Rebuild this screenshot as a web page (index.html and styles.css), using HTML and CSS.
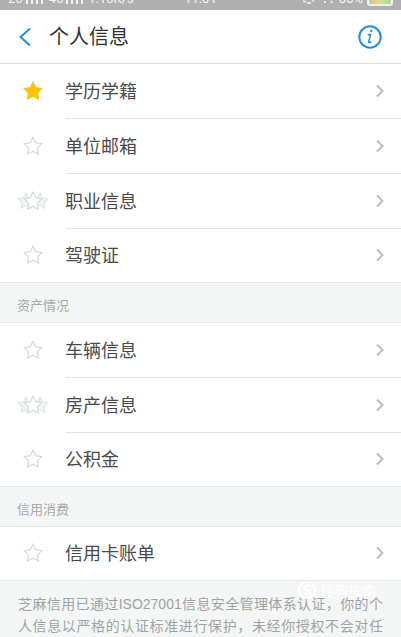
FILE: index.html
```html
<!DOCTYPE html>
<html lang="zh-CN">
<head>
<meta charset="utf-8">
<meta name="viewport" content="width=device-width, initial-scale=1">
<title>个人信息</title>
<link rel="stylesheet" href="styles.css">
</head>
<body>
<svg class="defs" aria-hidden="true">
  <symbol id="star" viewBox="0 0 20 20"><path d="M10 1.200l2.700 5.500 6.100.9-4.400 4.300 1 6.100-5.400-2.900L4.600 18l1-6.100L1.200 7.600l6.100-.9z"/></symbol>
  <symbol id="chevron" viewBox="0 0 10 14"><path d="M2 1.500L7.500 7 2 12.500"/></symbol>
</svg>
<div class="status">
  <div class="status-side">
    <span>26</span><svg class="signal" viewBox="0 0 18 8"><path d="M2 0v6M7 0v6M12 0v6M17 0v6"/></svg>
    <span class="network">46</span><svg class="signal" viewBox="0 0 18 8"><path d="M2 0v6M7 0v6M12 0v6M17 0v6"/></svg>
    <span class="speed">1.10K/s</span>
  </div>
  <span class="clock">11:01</span>
  <div class="status-side status-end">
    <svg class="wifi" viewBox="0 0 34 8"><path d="M2 3l3 1M6 5h4M11 2l2 1M24 3v2M30 3l1 2"/></svg>
    <span class="percent">88%</span><i class="battery"></i>
  </div>
</div>
<header class="header">
  <button class="icon-button" aria-label="返回"><svg class="back" viewBox="0 0 14 20"><path d="M12 1.500L2.500 10l9.500 8.500"/></svg></button>
  <h1>个人信息</h1>
  <button class="icon-button" aria-label="说明"><svg class="info" viewBox="0 0 24 24"><circle class="ring" cx="12" cy="12" r="10.700"/><path d="M9.800 10.300c1-.8 2-1.100 2.800-.9l-1.900 7.300c-.3 1.400 1 1.200 2.600-.2"/><circle class="dot" cx="13.200" cy="6" r="1.200"/></svg></button>
</header>
<main>
  <ul class="group">
    <li><a class="row" href="#"><span class="stars"><svg class="star gold"><use href="#star"/></svg></span><span class="label">学历学籍</span><svg class="chevron"><use href="#chevron"/></svg></a></li>
    <li><a class="row" href="#"><span class="stars"><svg class="star"><use href="#star"/></svg></span><span class="label">单位邮箱</span><svg class="chevron"><use href="#chevron"/></svg></a></li>
    <li><a class="row" href="#"><span class="stars"><svg class="star side"><use href="#star"/></svg><svg class="star front"><use href="#star"/></svg><svg class="star side"><use href="#star"/></svg></span><span class="label">职业信息</span><svg class="chevron"><use href="#chevron"/></svg></a></li>
    <li><a class="row" href="#"><span class="stars"><svg class="star"><use href="#star"/></svg></span><span class="label">驾驶证</span><svg class="chevron"><use href="#chevron"/></svg></a></li>
  </ul>
  <h2>资产情况</h2>
  <ul class="group">
    <li><a class="row" href="#"><span class="stars"><svg class="star"><use href="#star"/></svg></span><span class="label">车辆信息</span><svg class="chevron"><use href="#chevron"/></svg></a></li>
    <li><a class="row" href="#"><span class="stars"><svg class="star side"><use href="#star"/></svg><svg class="star front"><use href="#star"/></svg><svg class="star side"><use href="#star"/></svg></span><span class="label">房产信息</span><svg class="chevron"><use href="#chevron"/></svg></a></li>
    <li><a class="row" href="#"><span class="stars"><svg class="star"><use href="#star"/></svg></span><span class="label">公积金</span><svg class="chevron"><use href="#chevron"/></svg></a></li>
  </ul>
  <h2>信用消费</h2>
  <ul class="group">
    <li><a class="row" href="#"><span class="stars"><svg class="star"><use href="#star"/></svg></span><span class="label">信用卡账单</span><svg class="chevron"><use href="#chevron"/></svg></a></li>
  </ul>
</main>
<footer class="note">
  <div class="watermark"><svg viewBox="0 0 18 18"><circle cx="9" cy="9" r="8"/><path d="M12.500 5.500c-2-1.500-6.500-1.200-6.500 1.200 0 2.500 6.500 1.800 6.500 4.500 0 2.200-4.500 2.600-7 1"/></svg><span>搜狗指南</span></div>
  <p>芝麻信用已通过ISO27001信息安全管理体系认证，你的个人信息以严格的认证标准进行保护，未经你授权不会对任</p>
</footer>
</body>
</html>
```
FILE: styles.css
```css
* { box-sizing: border-box; }
body {
  margin: 0;
  background: #f4f6f6;
  color: #4a4a4a;
  font-family: "Noto Sans CJK SC", sans-serif;
}
svg { display: block; fill: none; flex: none; }
.defs { position: absolute; width: 0; height: 0; }
h1, h2, p, ul { margin: 0; padding: 0; font-weight: 400; }
ul { list-style: none; }

.status {
  display: flex;
  align-items: flex-end;
  justify-content: space-between;
  height: 10px;
  padding: 0 8px 4px;
  overflow: hidden;
  background: #b0b0b0;
  color: #f4f4f4;
  font: 13px/14px Roboto, sans-serif;
}
.status-side { display: flex; flex: 1; align-items: flex-end; gap: 2px; }
.status-end { justify-content: flex-end; gap: 4px; }
.signal { width: 18px; height: 8px; stroke: #f4f4f4; stroke-width: 2; }
.wifi { width: 34px; height: 8px; stroke: #e2e2e2; stroke-width: 2; }
.network { margin-left: 4px; }
.speed { margin-left: 3px; }
.battery {
  width: 26px;
  height: 10px;
  border: 2px solid #f0f0f0;
  border-radius: 3px;
  background: linear-gradient(90deg, #e6bd8c, #d5dc96, #a7d7a0);
}

.header {
  display: flex;
  align-items: center;
  height: 54px;
  padding: 0 16px;
  border-bottom: 1px solid #dcdcdc;
  background: #fff;
}
.header h1 { flex: 1; margin-left: 15px; padding-bottom: 2px; color: #333; font-size: 20px; line-height: 30px; }
.icon-button { padding: 0; border: 0; background: none; }
.back { width: 18px; height: 20px; stroke: #2190df; stroke-width: 2; }
.info { width: 24px; height: 24px; margin-right: 3px; stroke: #2190df; stroke-width: 1.5; }
.info .ring { stroke-width: 2; }
.info .dot { fill: #2190df; stroke: none; }

.group { background: #fff; }
.row {
  display: flex;
  align-items: center;
  height: 53px;
  padding: 0 16px 1px 0;
  color: inherit;
  text-decoration: none;
}
li:not(:last-child) .row {
  height: 55px;
  background: linear-gradient(#e2e4e4, #e2e4e4) 66px 100% / 100% 1px no-repeat;
}
.stars { display: flex; flex: none; justify-content: center; width: 65px; }
.star { width: 20px; height: 20px; fill: #fff; stroke: #d5d9da; stroke-width: 1.2; }
.gold { fill: #ffc107; stroke: #ffc107; }
.side { width: 18px; fill: #eff3f4; stroke: #dde4e6; }
.front { z-index: 1; margin: 0 -12px; }
.label {
  flex: 1;
  padding-bottom: 2px;
  font-size: 18px;
  line-height: 26px;
}
.chevron { width: 10px; height: 14px; stroke: #bdbdbd; stroke-width: 2; }

h2 {
  height: 41px;
  padding: 12px 17px 0;
  border: solid #e6e9e9;
  border-width: 1px 0;
  color: #a6a9a9;
  font-size: 13px;
  line-height: 20px;
}
.note { position: relative; padding: 12px 18px; border-top: 1px solid #e6e9e9; }
.note p {
  color: #a0a3a4;
  font-family: "Liberation Sans", "Noto Sans CJK SC", sans-serif;
  font-size: 14px;
  line-height: 22px;
  text-align: justify;
  text-align-last: justify;
}
.watermark {
  position: absolute;
  top: 0;
  right: 25px;
  display: flex;
  align-items: center;
  gap: 4px;
  color: #fff;
  font-size: 14px;
  line-height: 18px;
}
.watermark svg { width: 18px; height: 18px; stroke: #fff; stroke-width: 2; }
```
